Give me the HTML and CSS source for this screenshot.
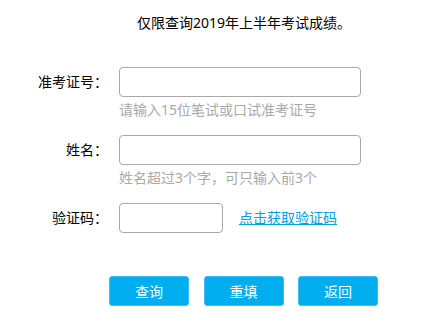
FILE: index.html
```html
<!DOCTYPE html>
<html lang="zh-CN">
<head>
<meta charset="utf-8">
<link rel="stylesheet" href="styles.css">
</head>
<body>
<div class="page">
  <p class="title">仅限查询2019年上半年考试成绩。</p>
  <form class="form">
    <div class="row">
      <label class="label">准考证号：</label>
      <div class="field">
        <input class="input input-wide" type="text">
        <div class="hint">请输入15位笔试或口试准考证号</div>
      </div>
    </div>
    <div class="row">
      <label class="label">姓名：</label>
      <div class="field">
        <input class="input input-wide" type="text">
        <div class="hint">姓名超过3个字，可只输入前3个</div>
      </div>
    </div>
    <div class="row row-last">
      <label class="label">验证码：</label>
      <div class="field field-inline">
        <input class="input input-short" type="text">
        <a class="link" href="#">点击获取验证码</a>
      </div>
    </div>
    <div class="actions">
      <button class="btn" type="button">查询</button>
      <button class="btn" type="button">重填</button>
      <button class="btn" type="button">返回</button>
    </div>
  </form>
</div>
</body>
</html>
```

FILE: styles.css
```css
* { box-sizing: border-box; }
html, body {
  margin: 0;
  padding: 0;
  background: #fff;
}
body {
  font-family: "Noto Sans", "Noto Sans CJK SC", sans-serif;
  font-size: 14px;
  color: #000;
}
.page {
  padding-top: 13px;
}
.title {
  margin: 0;
  padding-left: 137px;
  line-height: 20px;
  height: 20px;
}
.form {
  margin-top: 34px;
}
.row {
  display: flex;
  align-items: flex-start;
  margin-bottom: 12px;
}
.row-last {
  margin-bottom: 43px;
}
.label {
  width: 108px;
  flex: none;
  text-align: right;
  line-height: 30px;
  padding-left: 37px;
  white-space: nowrap;
}
.field {
  margin-left: 11px;
}
.field-inline {
  display: flex;
  align-items: center;
  gap: 16px;
}
.input {
  display: block;
  height: 30px;
  border: 1px solid #a9a9a9;
  border-radius: 4px;
  background: #fff;
  padding: 0 6px;
  font: inherit;
  outline: none;
}
.input-wide { width: 242px; }
.input-short { width: 104px; }
.hint {
  color: #a9a9a9;
  line-height: 26px;
  height: 26px;
}
.link {
  color: #00a0e9;
  text-decoration: underline;
  line-height: 30px;
}
.actions {
  display: flex;
  gap: 14.5px;
  padding-left: 109px;
}
.btn {
  width: 80px;
  height: 30px;
  border: 1px solid #3dbdf0;
  border-radius: 3px;
  background: #00aeef;
  color: #fff;
  font: inherit;
  padding: 0;
}
```
